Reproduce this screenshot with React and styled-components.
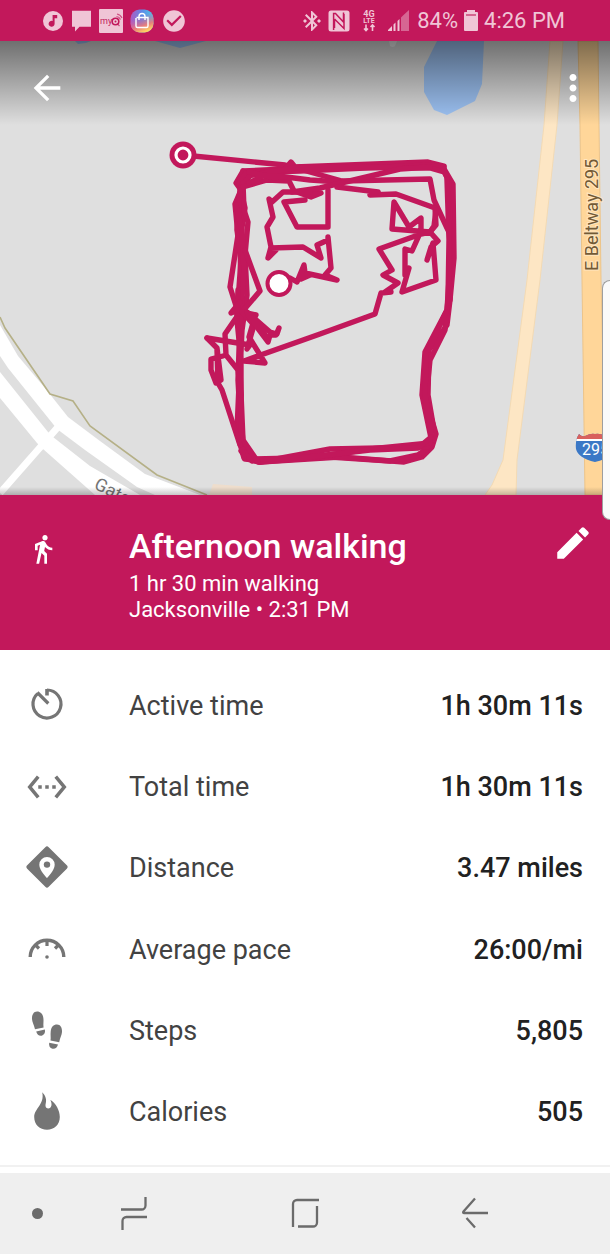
import React from 'react';
import styled, { createGlobalStyle } from 'styled-components';
import {
  MdArrowBack,
  MdBluetoothConnected,
  MdCheckCircle,
  MdDirectionsWalk,
  MdEdit,
  MdMoreVert,
  MdSettingsEthernet,
} from 'react-icons/md';

const GlobalStyle = createGlobalStyle`
  * {
    box-sizing: border-box;
  }

  body {
    margin: 0;
    background: #ffffff;
    font-family: Roboto, sans-serif;
  }
`;

const Screen = styled.div`
  position: relative;
  display: flex;
  flex-direction: column;
  min-height: 100vh;
`;

const StatusBar = styled.header`
  display: flex;
  align-items: center;
  justify-content: space-between;
  height: 41px;
  padding: 0 45px 0 42px;
  background: #c2185b;
  color: #f0c5d6;
  font-size: 22px;
`;

const StatusGroup = styled.div`
  display: flex;
  align-items: center;
  gap: ${(props) => props.$gap}px;

  svg {
    display: block;
  }
`;

const MapArea = styled.section`
  position: relative;
`;

const MapDrawing = styled.svg`
  display: block;
  width: 100%;
  height: auto;
`;

const MapToolbar = styled.div`
  position: absolute;
  top: 0;
  left: 0;
  right: 0;
  display: flex;
  justify-content: space-between;
  align-items: center;
  height: 84px;
  padding: 10px 16px 0 26px;
  background: linear-gradient(rgba(0, 0, 0, 0.5), rgba(0, 0, 0, 0));
`;

const IconButton = styled.button`
  display: flex;
  align-items: center;
  justify-content: center;
  width: 42px;
  height: 42px;
  padding: 0;
  border: none;
  background: none;
  color: ${(props) => props.$color || '#ffffff'};
  cursor: pointer;
`;

const Summary = styled.section`
  display: flex;
  align-items: flex-start;
  min-height: 155px;
  padding: 27px 16px 0 0;
  background: #c2185b;
  color: #ffffff;
`;

const IconSlot = styled.div`
  display: flex;
  justify-content: center;
  flex: none;
  width: 94px;
  margin-right: 35px;
  color: #757575;
`;

const SummaryIcon = styled(IconSlot)`
  width: 86px;
  margin-right: 43px;
  padding-top: 11px;
  color: #ffffff;
`;

const SummaryText = styled.div`
  flex: 1;
  min-width: 0;
  padding-top: 3px;
`;

const Title = styled.h1`
  margin: 0 0 4px;
  font-size: 34px;
  line-height: 42px;
  font-weight: 500;
`;

const Subtitle = styled.p`
  margin: 0;
  font-size: 22px;
  line-height: 26px;
`;

const Stats = styled.dl`
  flex: 1;
  display: grid;
  grid-auto-rows: 1fr;
  margin: 0;
  padding: 15px 27px 12px 0;
`;

const StatRow = styled.div`
  display: flex;
  align-items: center;
  min-height: 72px;
  font-size: 27px;
`;

const StatLabel = styled.dt`
  flex: 1;
  color: #424242;
`;

const StatValue = styled.dd`
  margin: 0;
  color: #212121;
  font-weight: 500;
`;

const Divider = styled.hr`
  width: 100%;
  margin: 0 0 6px;
  border: none;
  border-top: 2px solid #f1f1f1;
`;

const NavBar = styled.nav`
  display: grid;
  grid-template-columns: 49fr 170fr 171fr 170fr 50fr;
  align-items: center;
  justify-items: center;
  height: 81px;
  background: #efefef;
`;

const NavDot = styled.span`
  justify-self: end;
  width: 11px;
  height: 11px;
  margin-right: 6px;
  border-radius: 50%;
  background: #6b6b6b;
`;

const EdgeHandle = styled.div`
  position: absolute;
  top: 280px;
  right: 0;
  width: 8px;
  height: 240px;
  border: 1px solid #9e9e9e;
  border-right: none;
  border-radius: 8px 0 0 8px;
  background: #fafafa;
`;

const MusicIcon = () => (
  <svg width="22" height="22" viewBox="0 0 22 22">
    <circle cx="11" cy="11" r="10" fill="currentColor" />
    <path d="M10.600 5h4.600v3.200h-2.600v5.600a3 3 0 1 1-2-2.800z" fill="#c2185b" />
  </svg>
);

const MessageIcon = () => (
  <svg width="21" height="22" viewBox="0 0 21 22">
    <path d="M1 .8h19v16H8.500L4 21.500V16.800H1z" fill="currentColor" />
  </svg>
);

const MyQIcon = () => (
  <svg width="24" height="24" viewBox="0 0 24 24">
    <rect width="24" height="24" rx="1" fill="currentColor" />
    <text x="1" y="15" fontFamily="Roboto, sans-serif" fontSize="9" fill="#c2185b">my</text>
    <circle cx="16.500" cy="12.500" r="3.300" fill="none" stroke="#c2185b" strokeWidth="1.600" />
    <circle cx="16.500" cy="12.500" r="1" fill="#c2185b" />
    <path d="M18 14.500l2.500 2.500M17.500 7.500a5 5 0 0 1 4 3M18 5a7 7 0 0 1 5 4" fill="none" stroke="#c2185b" strokeWidth="1.200" opacity="0.700" />
  </svg>
);

const ShopIcon = () => (
  <svg width="24" height="24" viewBox="0 0 24 24">
    <defs>
      <linearGradient id="shop" x1="0" y1="0" x2="1" y2="0">
        <stop offset="0" stopColor="#b05ac0" />
        <stop offset="0.5" stopColor="#5f8ae8" />
        <stop offset="1" stopColor="#4ccbe6" />
      </linearGradient>
      <linearGradient id="shopWarm" x1="0.200" y1="0.200" x2="0.500" y2="1">
        <stop offset="0.200" stopColor="#e5509a" stopOpacity="0" />
        <stop offset="0.700" stopColor="#f57a72" stopOpacity="0.900" />
        <stop offset="1" stopColor="#ffd060" />
      </linearGradient>
    </defs>
    <rect x="0.500" y="0.500" width="23" height="23" rx="9" fill="url(#shop)" />
    <rect x="0.500" y="0.500" width="23" height="23" rx="9" fill="url(#shopWarm)" />
    <path d="M6.500 8.500h11.500v8.500a1.500 1.500 0 0 1-1.500 1.500h-9a1.500 1.500 0 0 1-1.500-1.500V9M9 11V7.500a3 3 0 0 1 6 0V11" fill="none" stroke="#fff" strokeWidth="1.400" />
  </svg>
);

const NfcIcon = () => (
  <svg width="22" height="22" viewBox="0 0 22 22">
    <rect x="0.500" y="0.500" width="21" height="21" rx="2.500" fill="currentColor" />
    <path d="M5.600 20V3.500h1.900L15.500 12V2.500M6.500 9.500V18M6.500 9l9.500 9.500V4" fill="none" stroke="#c2185b" strokeWidth="1.500" />
  </svg>
);

const NetworkIcon = () => (
  <svg width="14" height="22" viewBox="0 0 14 22">
    <g fill="currentColor" fontFamily="Roboto, sans-serif" fontWeight="700" textAnchor="middle">
      <text x="7" y="7" fontSize="9">4G</text>
      <text x="7" y="13" fontSize="7">LTE</text>
    </g>
    <path d="M4 14.500v6M2 18.500l2 2 2-2M10.500 21v-6M8.500 17l2-2 2 2" fill="none" stroke="currentColor" strokeWidth="1.600" />
  </svg>
);

const SignalIcon = () => (
  <svg width="21" height="21" viewBox="0 0 21 21">
    <path d="M0 21v-1l4-4v5zM5.500 21v-6.500l2-2V21zM9.500 21V11l2-2v12z" fill="currentColor" />
    <path d="M13 21V7.500l2-2V21zM15 21V5.500L21 0v21z" fill="currentColor" opacity="0.450" />
  </svg>
);

const BatteryIcon = () => (
  <svg width="14" height="21" viewBox="0 0 14 21">
    <path d="M0 3a1 1 0 0 1 1-1h2V0h8v2h2a1 1 0 0 1 1 1v17a1 1 0 0 1-1 1H1a1 1 0 0 1-1-1z" fill="currentColor" />
    <path d="M2 4h10v2H2z" fill="#d4658f" />
  </svg>
);

const ActiveTimeIcon = () => (
  <svg width="40" height="44" viewBox="0 0 40 44" fill="none" stroke="currentColor">
    <path d="M20 6a14 14 0 1 1-9.400 3.600" strokeWidth="3.200" />
    <path d="M20 5v6.500" strokeWidth="3.600" />
    <path d="M10.300 8.500L21.300 19.500" strokeWidth="3.200" />
  </svg>
);

const DistanceIcon = () => (
  <svg width="42" height="44" viewBox="0 0 42 44">
    <path d="M19.300 1.200a2.400 2.400 0 0 1 3.400 0l18.100 18.100a2.400 2.400 0 0 1 0 3.400L22.700 40.800a2.400 2.400 0 0 1-3.400 0L1.200 22.700a2.400 2.400 0 0 1 0-3.400z" fill="currentColor" />
    <path d="M21 11a7.700 7.700 0 0 0-7.700 7.700C13.300 24.400 21 32 21 32s7.700-7.600 7.700-13.300A7.700 7.700 0 0 0 21 11z" fill="#fff" />
    <circle cx="21" cy="18.600" r="3.200" fill="currentColor" />
  </svg>
);

const PaceIcon = () => (
  <svg width="40" height="28" viewBox="0 0 40 28" fill="none" stroke="currentColor">
    <path d="M3.200 21a16.800 16.800 0 0 1 33.600 0" strokeWidth="3.400" />
    <path d="M20 4v6M8.500 9l3.500 3.500M31.500 9L28 12.500" strokeWidth="3.200" />
    <circle cx="20" cy="21" r="1.800" fill="currentColor" stroke="none" />
  </svg>
);

const StepsIcon = () => (
  <svg width="32" height="42" viewBox="0 0 32 42" fill="currentColor">
    <path d="M6 1.500C2.500 1.500.8 5 1 9c.2 3.200 1.800 5.500 3 10.200l8.600-1.800c-.6-3 .2-5.400-.2-9C12 4 9.500 1.500 6 1.500z" />
    <path d="M5.200 21.500l8.700-1.900c.6 3-.7 5.500-3.200 6.100-2.600.5-4.700-1.200-5.500-4.200z" />
    <path d="M26 14.500c3.500 0 5.300 3.500 5 7.500-.2 3.200-1.900 5.500-2.800 10.300l-8.700-1.800c.5-3-.2-5.400.2-9 .4-4.400 2.800-7 6.300-7z" />
    <path d="M18.200 32.700l8.800 1.800c-.8 3-2.900 4.700-5.500 4.200-2.600-.6-3.900-3-3.300-6z" />
  </svg>
);

const FlameIcon = () => (
  <svg width="28" height="42" viewBox="0 0 28 42">
    <path d="M9.200 1.200C13 5 13.600 9 12.800 12c-.8 3.200 0 5.400 2.400 5.400 3.400 0 4.400-4 2.100-8.600C23 12.500 26.800 19.500 26.800 26c0 7.800-5.600 12.700-12.800 12.700S1.200 33.800 1.200 26c0-8.500 10.800-13 8-24.800z" fill="currentColor" />
  </svg>
);

const RecentsIcon = () => (
  <svg width="28" height="36" viewBox="0 0 28 36" fill="none" stroke="currentColor" strokeWidth="2.300">
    <path d="M1 13.500h20.500a4 4 0 0 0 4-4V1M27 21H6.500a4 4 0 0 0-4 4v9" />
  </svg>
);

const HomeIcon = () => (
  <svg width="28" height="32" viewBox="0 0 28 32" fill="none" stroke="currentColor" strokeWidth="2.300">
    <path d="M28 2H6a4 4 0 0 0-4 4v23M7 28.500h15a4 4 0 0 0 4-4V8" />
  </svg>
);

const NavBackIcon = () => (
  <svg width="28" height="34" viewBox="0 0 28 34" fill="none" stroke="currentColor" strokeWidth="2.300">
    <path d="M14 1.500L2.500 14.500c-.8 1-.3 1.500.7 1.500H27M5.500 21l8.500 9.500" />
  </svg>
);

// GPS track, one polyline per lap or stray segment
const track = [
  'M183 155L285 165L342 181L430 179L434 200L447 228L453 240',
  'M243 171L285 169L291 162L295 167L428 162L444 166',
  'M243 173L300 171L430 165L444 167',
  'M247 176L300 167L430 168L444 172L451 184L452 240L450 300',
  'M443 167L453 184L454 258L450 300L447 325L429 350L428 395L434 430',
  'M444 169L449 184L450 265L447 310L425 352L422 395L431 438',
  'M447 180L449 240L448 300L445 330L430 360L426 400L436 434L432 447L422 457L404 462L340 457L260 462',
  'M432 445L418 455L390 461L330 457L255 461',
  'M426 352L425 395L432 440M428 350L431 345L446 312',
  'M431 437L428 447L330 449L260 462L247 459L241 451',
  'M430 443L370 449L310 458L260 462L250 457L244 443',
  'M430 438L418 448L370 450L300 458L245 459',
  'M243 171L236 183L241 190L235 204L238 235L230 287L238 312',
  'M246 173L239 184L245 208L240 240L241 290L238 380L242 450',
  'M249 177L241 187L239 220L244 250L241 310L239 400L244 452L252 461',
  'M243 183L244 210L248 222L245 255L247 295L242 330L240 370L243 440L258 462',
  'M240 190L237 230L241 260L237 315L241 340L237 430',
  'M236 205L242 230L244 270L241 310L240 360L239 440L244 458',
  'M238 290L237 320L241 360L241 440',
  'M245 250L260 291L242 312',
  'M243 187L267 180L289 181L294 191L311 197L321 193L300 192L308 196L316 195',
  'M249 183L263 176L278 176L310 180L340 182M276 178L249 172',
  'M292 192L320 188L400 169L430 167',
  'M337 187L378 192L370 195L396 194L435 208L436 225L430 232',
  'M310 192L283 192L272 202L269 199L273 217L267 227L271 247L268 258L276 250L271 248L303 247L321 258L317 245L328 240L328 237L331 268L325 275L337 280L305 273L304 265L297 282L290 278L279 283M304 266L301 279L310 275',
  'M328 190L328 227L297 227L284 202L305 200',
  'M436 210L434 226L430 232L392 229L394 202L409 227L421 218L421 231L412 251L405 249L405 275L409 268L402 292L436 280L433 243L427 260L431 247L438 241L430 232L421 234L379 249L392 270L383 275L398 283L385 292L391 292L381 293L375 314L320 334L244 361L265 363L249 337L255 316',
  'M238 310L231 313L240 302M236 318L225 334L226 355L238 370L241 395',
  'M207 338L250 345L247 349L254 325L242 312L256 315',
  'M207 338L217 348L221 380L216 383L211 370L211 359L223 356M217 350L218 383L222 390L240 445',
  'M248 315L268 342L270 335L276 335L279 328L277 334L270 332L247 312M248 315L258 326L268 339',
];

const RouteMap = () => (
  <MapDrawing viewBox="0 41 610 454" role="img" aria-label="Route map">
    <defs>
      <linearGradient id="mapShade" x1="0" y1="0" x2="0" y2="1">
        <stop offset="0" stopColor="#000" stopOpacity="0" />
        <stop offset="1" stopColor="#000" stopOpacity="0.220" />
      </linearGradient>
      <clipPath id="shield">
        <path d="M579 434q3 3 6 2 6-3 10-2 5-1 10 2 3 1 6-2 4 6 3 15-2 9-19 13-17-4-19-13-1-9 3-15z" />
      </clipPath>
    </defs>
    <rect y="41" width="610" height="454" fill="#dfdfdf" />
    <g fill="#a0c6f8">
      <path d="M437 41L424 67V92L434 110L447 115L475 101L482 84L484 41z" />
      <path d="M75 41L78 44L86 43L91 41zM155 41L180 48L206 41z" />
    </g>
    <path d="M389 41h8l-2 5q-2 2-5 0z" fill="#f5f5f5" />
    <path d="M550 41L544 125L527 280L503 460L492 485L485 495H516L517 460L540 280L557 125L563 41z" fill="#fde6c4" stroke="#f3dab4" />
    <path d="M578 41L580 125L582 280L585 495H606L601 280L599 125L598 41z" fill="#ffd699" stroke="#ecc48a" />
    <path d="M213 484L252 487V495H209z" fill="#eeddcc" />
    <g fill="#fff">
      <path d="M0 325L18 356L45 388L68 417L100 441L145 474L200 495H155L137 487L85 450L57 429L8 368L0 356z" />
      <path d="M0 372L48 432L53 437L90 466L140 495H95L43 449L37 443L0 398z" />
    </g>
    <path d="M0 493L58 427" stroke="#fff" strokeWidth="7" />
    <path d="M0 317L5 328L50 394L73 401L90 426L157 475L207 495" fill="none" stroke="#b5b087" strokeWidth="1.600" />
    <text transform="translate(93 488) rotate(27)" fontFamily="Roboto, sans-serif" fontSize="18" fill="#757575" stroke="#fff" strokeWidth="2" paintOrder="stroke">
      Gate
    </text>
    <text
      transform="translate(598 271) rotate(-90)"
      fontFamily="Roboto, sans-serif"
      fontSize="18"
      fill="#735a35"
      stroke="#ffe6c0"
      strokeWidth="2"
      paintOrder="stroke"
    >
      E Beltway 295
    </text>
    <g clipPath="url(#shield)">
      <rect x="574" y="430" width="44" height="34" fill="#3b78c6" />
      <rect x="574" y="430" width="44" height="9" fill="#d9605d" />
      <rect x="574" y="439" width="44" height="2" fill="#fff" />
    </g>
    <text x="582" y="455" fontFamily="Roboto, sans-serif" fontSize="16" fill="#fff">295</text>
    <g fill="none" stroke="#c2185b" strokeWidth="5.400" strokeLinejoin="round" strokeLinecap="round">
      {track.map((segment) => (
        <path key={segment} d={segment} />
      ))}
    </g>
    <circle cx="183" cy="155" r="13.500" fill="#c2185b" />
    <circle cx="183" cy="155" r="7" fill="#c2185b" stroke="#fff" strokeWidth="3.200" />
    <circle cx="279" cy="283.500" r="11.500" fill="#fff" stroke="#c2185b" strokeWidth="4" />
    <rect y="487" width="610" height="8" fill="url(#mapShade)" />
  </MapDrawing>
);

const stats = [
  { label: 'Active time', value: '1h 30m 11s', icon: <ActiveTimeIcon /> },
  { label: 'Total time', value: '1h 30m 11s', icon: <MdSettingsEthernet size={42} /> },
  { label: 'Distance', value: '3.47 miles', icon: <DistanceIcon /> },
  { label: 'Average pace', value: '26:00/mi', icon: <PaceIcon /> },
  { label: 'Steps', value: '5,805', icon: <StepsIcon /> },
  { label: 'Calories', value: '505', icon: <FlameIcon /> },
];

const App = () => {
  return (
    <Screen>
      <GlobalStyle />
      <StatusBar>
        <StatusGroup $gap={7}>
          <MusicIcon />
          <MessageIcon />
          <MyQIcon />
          <ShopIcon />
          <MdCheckCircle size={26} />
        </StatusGroup>
        <StatusGroup $gap={8}>
          <StatusGroup $gap={12}>
            <StatusGroup $gap={4}>
              <MdBluetoothConnected size={24} />
              <NfcIcon />
            </StatusGroup>
            <NetworkIcon />
            <SignalIcon />
          </StatusGroup>
          <StatusGroup $gap={6}>
            <span>84%</span>
            <BatteryIcon />
            <span>4:26 PM</span>
          </StatusGroup>
        </StatusGroup>
      </StatusBar>

      <MapArea>
        <RouteMap />
        <MapToolbar>
          <IconButton aria-label="Back">
            <MdArrowBack size={40} />
          </IconButton>
          <IconButton aria-label="More options">
            <MdMoreVert size={42} />
          </IconButton>
        </MapToolbar>
      </MapArea>

      <Summary>
        <SummaryIcon>
          <MdDirectionsWalk size={32} />
        </SummaryIcon>
        <SummaryText>
          <Title>Afternoon walking</Title>
          <Subtitle>1 hr 30 min walking</Subtitle>
          <Subtitle>Jacksonville • 2:31 PM</Subtitle>
        </SummaryText>
        <IconButton aria-label="Edit activity">
          <MdEdit size={42} />
        </IconButton>
      </Summary>

      <Stats>
        {stats.map((stat) => (
          <StatRow key={stat.label}>
            <IconSlot as="dt" aria-hidden="true">{stat.icon}</IconSlot>
            <StatLabel>{stat.label}</StatLabel>
            <StatValue>{stat.value}</StatValue>
          </StatRow>
        ))}
      </Stats>
      <Divider />

      <NavBar>
        <NavDot />
        <IconButton $color="#6b6b6b" aria-label="Recent apps">
          <RecentsIcon />
        </IconButton>
        <IconButton $color="#6b6b6b" aria-label="Home">
          <HomeIcon />
        </IconButton>
        <IconButton $color="#6b6b6b" aria-label="Go back">
          <NavBackIcon />
        </IconButton>
      </NavBar>
      <EdgeHandle />
    </Screen>
  );
};

export default App;
